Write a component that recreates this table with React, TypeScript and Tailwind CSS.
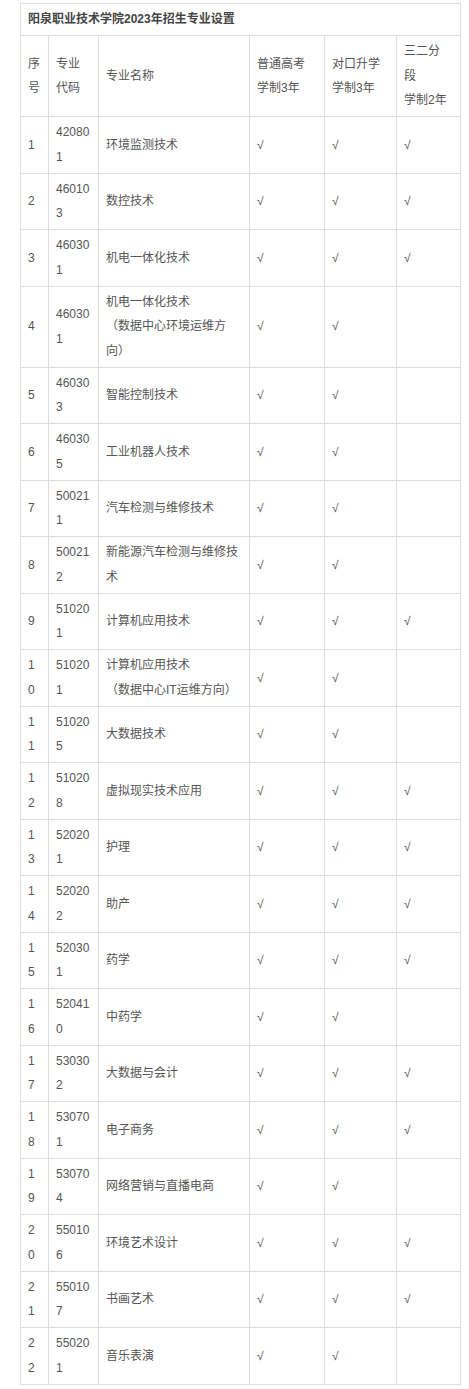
import React from "react";

type Row = [string, string, string[], boolean, boolean, boolean];

const rows: Row[] = [
  ["1", "420801", ["环境监测技术"], true, true, true],
  ["2", "460103", ["数控技术"], true, true, true],
  ["3", "460301", ["机电一体化技术"], true, true, true],
  ["4", "460301", ["机电一体化技术", "（数据中心环境运维方向）"], true, true, false],
  ["5", "460303", ["智能控制技术"], true, true, false],
  ["6", "460305", ["工业机器人技术"], true, true, false],
  ["7", "500211", ["汽车检测与维修技术"], true, true, false],
  ["8", "500212", ["新能源汽车检测与维修技术"], true, true, false],
  ["9", "510201", ["计算机应用技术"], true, true, true],
  ["10", "510201", ["计算机应用技术", "（数据中心IT运维方向）"], true, true, false],
  ["11", "510205", ["大数据技术"], true, true, false],
  ["12", "510208", ["虚拟现实技术应用"], true, true, true],
  ["13", "520201", ["护理"], true, true, true],
  ["14", "520202", ["助产"], true, true, true],
  ["15", "520301", ["药学"], true, true, true],
  ["16", "520410", ["中药学"], true, true, false],
  ["17", "530302", ["大数据与会计"], true, true, true],
  ["18", "530701", ["电子商务"], true, true, true],
  ["19", "530704", ["网络营销与直播电商"], true, true, false],
  ["20", "550106", ["环境艺术设计"], true, true, true],
  ["21", "550107", ["书画艺术"], true, true, true],
  ["22", "550201", ["音乐表演"], true, true, false],
];

const cell =
  "border border-[#dddddd] px-[7px] py-[3.25px] align-middle text-left break-all";

function Lines({ lines }: { lines: string[] }) {
  return (
    <>
      {lines.map((l, i) => (
        <React.Fragment key={i}>
          {i > 0 && <br />}
          {l}
        </React.Fragment>
      ))}
    </>
  );
}

export default function App() {
  return (
    <div
      className="bg-white pl-[20px] pt-[3px] text-[12px] leading-[24.5px] text-[#555555]"
      style={{ fontFamily: '"Liberation Sans", "Noto Sans CJK SC", sans-serif' }}
    >
      <table className="w-[440px] table-fixed border-collapse">
        <colgroup>
          <col className="w-[28px]" />
          <col className="w-[50px]" />
          <col className="w-[151px]" />
          <col className="w-[75px]" />
          <col className="w-[72px]" />
          <col className="w-[64px]" />
        </colgroup>
        <tbody>
          <tr>
            <td colSpan={6} className={`${cell} font-bold text-[#444444]`}>
              阳泉职业技术学院2023年招生专业设置
            </td>
          </tr>
          <tr>
            <td className={cell}>
              <Lines lines={["序", "号"]} />
            </td>
            <td className={cell}>
              <Lines lines={["专业", "代码"]} />
            </td>
            <td className={cell}>专业名称</td>
            <td className={cell}>
              <Lines lines={["普通高考", "学制3年"]} />
            </td>
            <td className={cell}>
              <Lines lines={["对口升学", "学制3年"]} />
            </td>
            <td className={cell}>
              <Lines lines={["三二分", "段", "学制2年"]} />
            </td>
          </tr>
          {rows.map(([n, code, name, a, b, c]) => (
            <tr key={n}>
              <td className={cell}>
                <Lines lines={n.split("")} />
              </td>
              <td className={cell}>
                <Lines lines={[code.slice(0, 5), code.slice(5)]} />
              </td>
              <td className={cell}>
                <Lines lines={name} />
              </td>
              <td className={cell}>{a ? "√" : ""}</td>
              <td className={cell}>{b ? "√" : ""}</td>
              <td className={cell}>{c ? "√" : ""}</td>
            </tr>
          ))}
        </tbody>
      </table>
    </div>
  );
}
